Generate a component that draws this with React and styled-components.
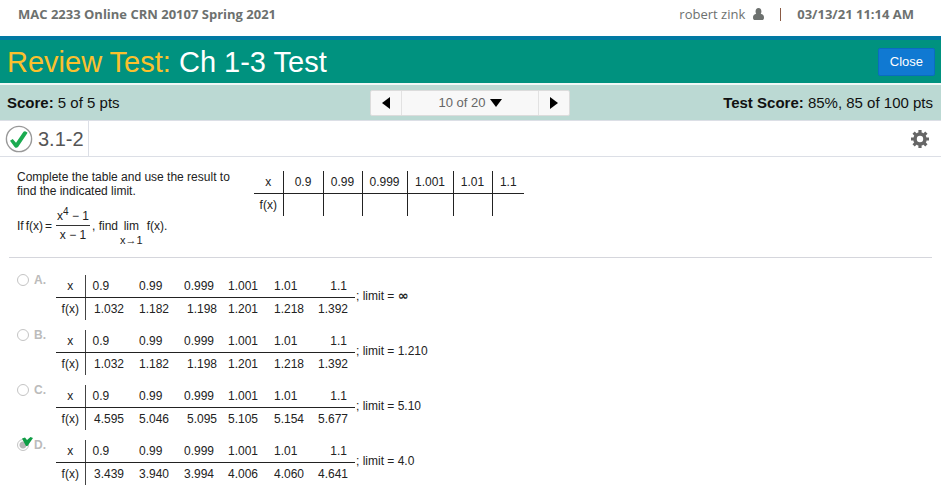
import React from "react";
import styled, { createGlobalStyle } from "styled-components";

const GlobalStyle = createGlobalStyle`
  * {
    box-sizing: border-box;
  }

  body {
    margin: 0;
    background: #fff;
    color: #222;
    font-family: "Liberation Sans", Arial, sans-serif;
    font-size: 12px;
    line-height: 14px;
  }

  button,
  select {
    font-family: inherit;
  }
`;

const TopBar = styled.header`
  display: flex;
  justify-content: space-between;
  align-items: center;
  height: 40px;
  padding: 0 27px 8px 18px;
  border-bottom: 4px solid #007aa3;
  color: #6d716f;
  font-family: "Open Sans", sans-serif;
  font-size: 13px;
  line-height: 20px;
`;

const CourseName = styled.span`
  font-weight: 700;
`;

const UserInfo = styled.div`
  display: flex;
  align-items: center;
`;

const UserIcon = styled.svg`
  width: 11px;
  height: 12px;
  margin-left: 8px;
`;

const Divider = styled.span`
  width: 1px;
  height: 13px;
  margin: 0 16px;
  background: #8a5a44;
`;

const TitleBar = styled.div`
  display: flex;
  justify-content: space-between;
  align-items: center;
  height: 45px;
  padding: 0 6px 0 7px;
  border-bottom: 2px solid #f0f8f6;
  background: #00927f;
`;

const Title = styled.h1`
  margin: 0;
  color: #fff;
  font-size: 29px;
  font-weight: 400;
  line-height: 32px;
`;

const TitleMode = styled.span`
  color: #fbc02d;
`;

const CloseButton = styled.button`
  height: 28px;
  padding: 0 11px;
  border: 1px solid #0a6cc0;
  border-radius: 2px;
  background: #1079d2;
  color: #fff;
  font-size: 13px;
`;

const ScoreBar = styled.div`
  display: grid;
  grid-template-columns: 1fr auto 1fr;
  align-items: center;
  height: 36px;
  padding: 0 8px 0 7px;
  border-bottom: 1px solid #dcdfe6;
  background: #bbd9d3;
  color: #111;
  font-size: 15px;
`;

const Score = styled.span`
  text-align: ${({ $end }) => ($end ? "right" : "left")};
`;

const Pager = styled.nav`
  display: flex;
  height: 26px;
  border: 1px solid #dcdcdc;
  border-radius: 2px;
  background: #f8f8f8;
`;

const PagerButton = styled.button`
  display: flex;
  align-items: center;
  justify-content: center;
  width: 30px;
  padding: 0;
  border: none;
  background: none;
`;

const PagerSelect = styled.label`
  display: flex;
  align-items: center;
  justify-content: center;
  gap: 4px;
  width: 138px;
  border: solid #e2e2e2;
  border-width: 0 1px;
`;

const Select = styled.select`
  padding: 0;
  border: none;
  appearance: none;
  background: none;
  color: #666;
  font-size: 13px;
`;

const SectionBar = styled.div`
  display: flex;
  justify-content: space-between;
  align-items: center;
  height: 36px;
  padding-right: 12px;
  border-bottom: 1px solid #dcdfe6;
`;

const Section = styled.h2`
  display: flex;
  align-items: center;
  gap: 5px;
  height: 35px;
  margin: 0;
  padding: 0 4px 0 5px;
  border-right: 1px solid #dcdfe6;
  color: #555;
  font-size: 20px;
  font-weight: 400;
`;

const IconButton = styled.button`
  display: flex;
  padding: 0;
  border: none;
  background: none;
`;

const Question = styled.section`
  display: flex;
  gap: 20px;
  margin: 0 9px;
  padding: 13px 8px 10px;
  border-bottom: 1px solid #d5d6dc;
`;

const Prompt = styled.div`
  width: 217px;
`;

const PromptText = styled.p`
  margin: 0 0 7px;
`;

const Formula = styled.div`
  display: flex;
  align-items: center;
`;

const Equation = styled.span`
  display: flex;
  gap: 2px;
`;

const Fraction = styled.span`
  display: flex;
  flex-direction: column;
  align-items: center;
  width: 34px;
  margin: 0 2px 0 4px;
  white-space: nowrap;
`;

const Numerator = styled.span`
  width: 100%;
  height: 18px;
  padding-top: 1px;
  border-bottom: 1px solid #333;
  text-align: center;

  sup {
    font-size: 10px;
    line-height: 0;
  }
`;

const Denominator = styled.span`
  height: 18px;
  padding-top: 2px;
`;

const Limit = styled.span`
  display: flex;
  flex-direction: column;
  align-items: center;
  margin: 14px 4px 0 2px;

  small {
    font-size: 11px;
  }
`;

const Table = styled.table`
  height: 45px;
  border-collapse: collapse;
  table-layout: fixed;

  th,
  td {
    height: 22px;
    padding: 0;
    font-weight: 400;
  }

  tr:first-child > * {
    border-bottom: 1px solid #222;
  }
`;

const QuestionTable = styled(Table)`
  width: 270px;
  margin-top: 1px;

  th,
  td {
    text-align: center;
  }

  tr > * + * {
    border-left: 1px solid #222;
  }
`;

const AnswerTable = styled(Table)`
  width: 299px;

  tr > *:first-child {
    border-right: 1px solid #444;
    text-align: center;
  }
`;

const Cell = styled.td`
  && {
    padding: 0 ${({ $tight }) => ($tight ? 4 : 8)}px 0 7px;
    text-align: ${({ $right }) => ($right ? "right" : "left")};
  }
`;

const Options = styled.fieldset`
  display: flex;
  flex-direction: column;
  gap: 10px;
  margin: 0;
  padding: 17px 17px 0;
  border: none;
`;

const Option = styled.div`
  display: flex;
  align-items: center;
`;

const Choice = styled.label`
  position: relative;
  display: flex;
  align-items: center;
  align-self: flex-start;
  gap: 5px;
  width: 39px;
  height: 10px;
  color: #bbb;
  font-weight: 700;
`;

const Radio = styled.input`
  width: 12px;
  height: 12px;
  margin: 0;
  border: 1px solid #c4c4c4;
  border-radius: 50%;
  appearance: none;
  background: #fff;

  &:checked {
    background: radial-gradient(#b5b5b5 3px, #fff 4px);
  }
`;

const CorrectMark = styled.svg`
  position: absolute;
  top: -3px;
  left: 5px;
  width: 11px;
  height: 9px;
`;

const LimitText = styled.span`
  padding: 0 0 4px 1px;
`;

const InfinitySign = styled.span`
  font-family: "DejaVu Sans", sans-serif;
  font-size: 13px;
  font-weight: 700;
`;

const headings = ["0.9", "0.99", "0.999", "1.001", "1.01", "1.1"];
const questionColumns = [29, 40, 39, 45, 46, 39, 32];
const answerColumns = [29, 47, 45, 44, 46, 44, 44];

const options = [
  {
    letter: "A",
    values: ["1.032", "1.182", "1.198", "1.201", "1.218", "1.392"],
    limit: <InfinitySign>∞</InfinitySign>,
  },
  {
    letter: "B",
    values: ["1.032", "1.182", "1.198", "1.201", "1.218", "1.392"],
    limit: "1.210",
  },
  {
    letter: "C",
    values: ["4.595", "5.046", "5.095", "5.105", "5.154", "5.677"],
    limit: "5.10",
  },
  {
    letter: "D",
    values: ["3.439", "3.940", "3.994", "4.006", "4.060", "4.641"],
    limit: "4.0",
    correct: true,
  },
];

const Columns = ({ widths }) => (
  <colgroup>
    {widths.map((width, i) => (
      <col key={i} width={width} />
    ))}
  </colgroup>
);

const Arrow = ({ points, width, height }) => (
  <svg width={width} height={height} aria-hidden="true">
    <polygon points={points} fill="#000" />
  </svg>
);

const AnswerOption = ({ letter, values, limit, correct }) => (
  <Option>
    <Choice>
      <Radio type="radio" name="answer" defaultChecked={correct} disabled />
      {letter}.
      {correct && (
        <CorrectMark viewBox="0 0 11 9">
          <path d="M0 1.5 L3 .5 L5 3 L8.5 0 L11 1 L5.5 9 L4 9 Z" fill="#0f9d45" />
        </CorrectMark>
      )}
    </Choice>
    <AnswerTable>
      <Columns widths={answerColumns} />
      <tbody>
        <tr>
          <th>x</th>
          {headings.map((heading) => (
            <Cell key={heading} $right={heading === "1.1"}>
              {heading}
            </Cell>
          ))}
        </tr>
        <tr>
          <th>f(x)</th>
          {values.map((value, i) => (
            <Cell key={i} $right={i !== 3 && !(correct && i === 2)} $tight={i === 2}>
              {value}
            </Cell>
          ))}
        </tr>
      </tbody>
    </AnswerTable>
    <LimitText>; limit = {limit}</LimitText>
  </Option>
);

const App = () => {
  return (
    <div>
      <GlobalStyle />
      <TopBar>
        <CourseName>MAC 2233 Online CRN 20107 Spring 2021</CourseName>
        <UserInfo>
          <span>robert zink</span>
          <UserIcon viewBox="0 0 11 12">
            <ellipse cx="5.5" cy="3.5" rx="2.9" ry="3.5" fill="currentColor" />
            <path
              d="M2.6 6 C.8 6.3 0 7.8 0 9.7 C0 11.2 .8 12 2 12 H9 C10.2 12 11 11.2 11 9.7 C11 7.8 10.2 6.3 8.4 6Z"
              fill="currentColor"
            />
          </UserIcon>
          <Divider />
          <b>03/13/21 11:14 AM</b>
        </UserInfo>
      </TopBar>

      <TitleBar>
        <Title>
          <TitleMode>Review Test:</TitleMode> Ch 1-3 Test
        </Title>
        <CloseButton type="button">Close</CloseButton>
      </TitleBar>

      <ScoreBar>
        <Score>
          <b>Score:</b> 5 of 5 pts
        </Score>
        <Pager>
          <PagerButton type="button" aria-label="Previous question">
            <Arrow points="8,0 8,12 0,6" width={8} height={12} />
          </PagerButton>
          <PagerSelect>
            <Select aria-label="Question">
              <option>10 of 20</option>
            </Select>
            <Arrow points="0,0 12,0 6,8" width={12} height={8} />
          </PagerSelect>
          <PagerButton type="button" aria-label="Next question">
            <Arrow points="0,0 8,6 0,12" width={8} height={12} />
          </PagerButton>
        </Pager>
        <Score $end>
          <b>Test Score:</b> 85%, 85 of 100 pts
        </Score>
      </ScoreBar>

      <SectionBar>
        <Section>
          <svg width="28" height="28" viewBox="0 0 28 28" aria-hidden="true">
            <circle cx="14" cy="14" r="12.6" fill="#fff" stroke="#999" strokeWidth="1.4" />
            <path
              d="M5 15.8 L7.7 14 L11 17.8 L18.5 6.8 Q19.5 5.8 20.8 6.6 L22.6 7.8 L13.2 21.8 Q11.4 23.8 9.6 22Z"
              fill="#1aab50"
            />
          </svg>
          3.1-2
        </Section>
        <IconButton type="button" aria-label="Settings">
          <svg width="18" height="18" viewBox="0 0 18 18">
            <circle cx="9" cy="9" r="5" fill="none" stroke="#666" strokeWidth="3.6" />
            <path
              d="M9 0V3M9 15V18M0 9H3M15 9H18M2.6 2.6L4.8 4.8M13.2 13.2L15.4 15.4M15.4 2.6L13.2 4.8M4.8 13.2L2.6 15.4"
              stroke="#666"
              strokeWidth="3.2"
            />
          </svg>
        </IconButton>
      </SectionBar>

      <Question>
        <Prompt>
          <PromptText>
            Complete the table and use the result to find the indicated limit.
          </PromptText>
          <Formula>
            <Equation>
              <span>If</span>
              <span>f(x)</span>
              <span>=</span>
            </Equation>
            <Fraction>
              <Numerator>
                x<sup>4</sup> − 1
              </Numerator>
              <Denominator>x − 1</Denominator>
            </Fraction>
            <span>, find</span>
            <Limit>
              <span>lim</span>
              <small>x→1</small>
            </Limit>
            <span>f(x).</span>
          </Formula>
        </Prompt>
        <QuestionTable>
          <Columns widths={questionColumns} />
          <tbody>
            <tr>
              <th>x</th>
              {headings.map((heading) => (
                <td key={heading}>{heading}</td>
              ))}
            </tr>
            <tr>
              <th>f(x)</th>
              {headings.map((heading) => (
                <td key={heading} />
              ))}
            </tr>
          </tbody>
        </QuestionTable>
      </Question>

      <Options>
        {options.map((option) => (
          <AnswerOption key={option.letter} {...option} />
        ))}
      </Options>
    </div>
  );
};

export default App;
